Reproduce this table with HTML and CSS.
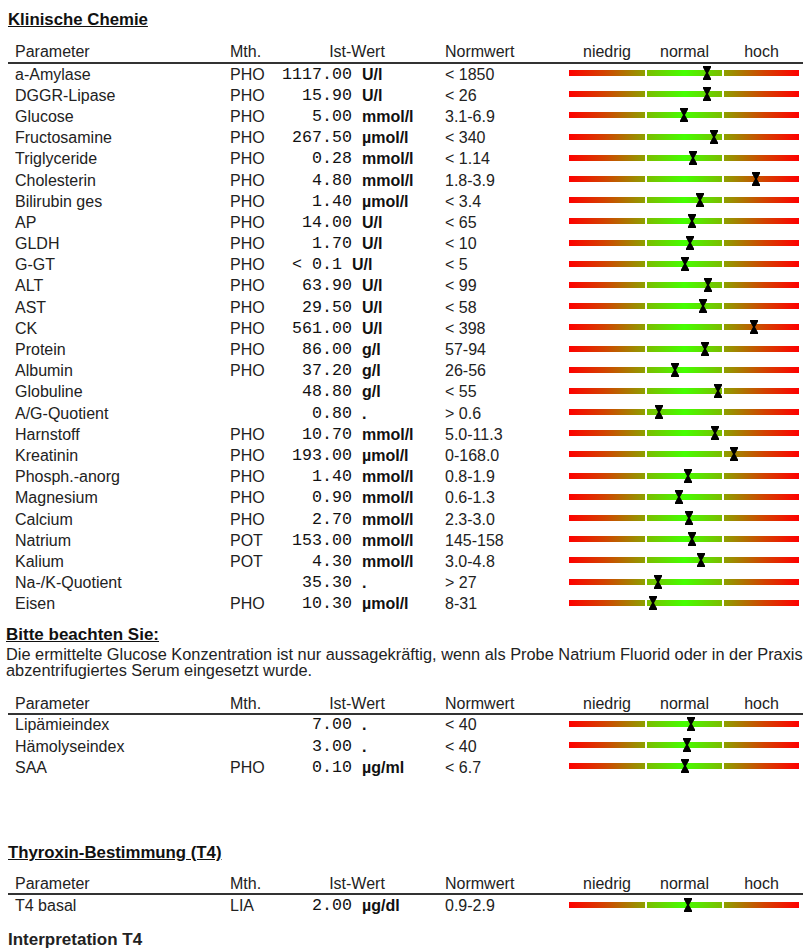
FILE: index.html
```html
<!DOCTYPE html>
<html lang="de">
<head>
<meta charset="utf-8">
<title>Klinische Chemie</title>
<link rel="stylesheet" href="styles.css">
</head>
<body>
<div class="page">
  <h2 class="section-title">Klinische Chemie</h2>
  <div class="table">
    <div class="row head">
      <div class="c-param">Parameter</div><div class="c-mth">Mth.</div><div class="c-ist">Ist-Wert</div><div class="c-norm">Normwert</div>
      <div class="c-bar scale"><span>niedrig</span><span>normal</span><span>hoch</span></div>
    </div>
    <div class="row"><div class="c-param">a-Amylase</div><div class="c-mth">PHO</div><div class="c-val">1117.00</div><div class="c-unit">U/l</div><div class="c-norm">&lt; 1850</div><div class="c-bar"><div class="bar"><i class="lo"></i><i class="ok"></i><i class="hi"></i><svg class="mark" style="left:134px" viewBox="0 0 8 14"><polygon points="0,0 8,0 8,1.5 5,7 8,12.5 8,14 0,14 0,12.5 3,7 0,1.5"/></svg></div></div></div>
    <div class="row"><div class="c-param">DGGR-Lipase</div><div class="c-mth">PHO</div><div class="c-val">15.90</div><div class="c-unit">U/l</div><div class="c-norm">&lt; 26</div><div class="c-bar"><div class="bar"><i class="lo"></i><i class="ok"></i><i class="hi"></i><svg class="mark" style="left:134px" viewBox="0 0 8 14"><polygon points="0,0 8,0 8,1.5 5,7 8,12.5 8,14 0,14 0,12.5 3,7 0,1.5"/></svg></div></div></div>
    <div class="row"><div class="c-param">Glucose</div><div class="c-mth">PHO</div><div class="c-val">5.00</div><div class="c-unit">mmol/l</div><div class="c-norm">3.1-6.9</div><div class="c-bar"><div class="bar"><i class="lo"></i><i class="ok"></i><i class="hi"></i><svg class="mark" style="left:111px" viewBox="0 0 8 14"><polygon points="0,0 8,0 8,1.5 5,7 8,12.5 8,14 0,14 0,12.5 3,7 0,1.5"/></svg></div></div></div>
    <div class="row"><div class="c-param">Fructosamine</div><div class="c-mth">PHO</div><div class="c-val">267.50</div><div class="c-unit">µmol/l</div><div class="c-norm">&lt; 340</div><div class="c-bar"><div class="bar"><i class="lo"></i><i class="ok"></i><i class="hi"></i><svg class="mark" style="left:141px" viewBox="0 0 8 14"><polygon points="0,0 8,0 8,1.5 5,7 8,12.5 8,14 0,14 0,12.5 3,7 0,1.5"/></svg></div></div></div>
    <div class="row"><div class="c-param">Triglyceride</div><div class="c-mth">PHO</div><div class="c-val">0.28</div><div class="c-unit">mmol/l</div><div class="c-norm">&lt; 1.14</div><div class="c-bar"><div class="bar"><i class="lo"></i><i class="ok"></i><i class="hi"></i><svg class="mark" style="left:120px" viewBox="0 0 8 14"><polygon points="0,0 8,0 8,1.5 5,7 8,12.5 8,14 0,14 0,12.5 3,7 0,1.5"/></svg></div></div></div>
    <div class="row"><div class="c-param">Cholesterin</div><div class="c-mth">PHO</div><div class="c-val">4.80</div><div class="c-unit">mmol/l</div><div class="c-norm">1.8-3.9</div><div class="c-bar"><div class="bar"><i class="lo"></i><i class="ok"></i><i class="hi"></i><svg class="mark" style="left:183px" viewBox="0 0 8 14"><polygon points="0,0 8,0 8,1.5 5,7 8,12.5 8,14 0,14 0,12.5 3,7 0,1.5"/></svg></div></div></div>
    <div class="row"><div class="c-param">Bilirubin ges</div><div class="c-mth">PHO</div><div class="c-val">1.40</div><div class="c-unit">µmol/l</div><div class="c-norm">&lt; 3.4</div><div class="c-bar"><div class="bar"><i class="lo"></i><i class="ok"></i><i class="hi"></i><svg class="mark" style="left:127px" viewBox="0 0 8 14"><polygon points="0,0 8,0 8,1.5 5,7 8,12.5 8,14 0,14 0,12.5 3,7 0,1.5"/></svg></div></div></div>
    <div class="row"><div class="c-param">AP</div><div class="c-mth">PHO</div><div class="c-val">14.00</div><div class="c-unit">U/l</div><div class="c-norm">&lt; 65</div><div class="c-bar"><div class="bar"><i class="lo"></i><i class="ok"></i><i class="hi"></i><svg class="mark" style="left:119px" viewBox="0 0 8 14"><polygon points="0,0 8,0 8,1.5 5,7 8,12.5 8,14 0,14 0,12.5 3,7 0,1.5"/></svg></div></div></div>
    <div class="row"><div class="c-param">GLDH</div><div class="c-mth">PHO</div><div class="c-val">1.70</div><div class="c-unit">U/l</div><div class="c-norm">&lt; 10</div><div class="c-bar"><div class="bar"><i class="lo"></i><i class="ok"></i><i class="hi"></i><svg class="mark" style="left:117px" viewBox="0 0 8 14"><polygon points="0,0 8,0 8,1.5 5,7 8,12.5 8,14 0,14 0,12.5 3,7 0,1.5"/></svg></div></div></div>
    <div class="row"><div class="c-param">G-GT</div><div class="c-mth">PHO</div><div class="c-val">&lt; 0.1&nbsp;</div><div class="c-unit shift">U/l</div><div class="c-norm">&lt; 5</div><div class="c-bar"><div class="bar"><i class="lo"></i><i class="ok"></i><i class="hi"></i><svg class="mark" style="left:112px" viewBox="0 0 8 14"><polygon points="0,0 8,0 8,1.5 5,7 8,12.5 8,14 0,14 0,12.5 3,7 0,1.5"/></svg></div></div></div>
    <div class="row"><div class="c-param">ALT</div><div class="c-mth">PHO</div><div class="c-val">63.90</div><div class="c-unit">U/l</div><div class="c-norm">&lt; 99</div><div class="c-bar"><div class="bar"><i class="lo"></i><i class="ok"></i><i class="hi"></i><svg class="mark" style="left:135px" viewBox="0 0 8 14"><polygon points="0,0 8,0 8,1.5 5,7 8,12.5 8,14 0,14 0,12.5 3,7 0,1.5"/></svg></div></div></div>
    <div class="row"><div class="c-param">AST</div><div class="c-mth">PHO</div><div class="c-val">29.50</div><div class="c-unit">U/l</div><div class="c-norm">&lt; 58</div><div class="c-bar"><div class="bar"><i class="lo"></i><i class="ok"></i><i class="hi"></i><svg class="mark" style="left:130px" viewBox="0 0 8 14"><polygon points="0,0 8,0 8,1.5 5,7 8,12.5 8,14 0,14 0,12.5 3,7 0,1.5"/></svg></div></div></div>
    <div class="row"><div class="c-param">CK</div><div class="c-mth">PHO</div><div class="c-val">561.00</div><div class="c-unit">U/l</div><div class="c-norm">&lt; 398</div><div class="c-bar"><div class="bar"><i class="lo"></i><i class="ok"></i><i class="hi"></i><svg class="mark" style="left:181px" viewBox="0 0 8 14"><polygon points="0,0 8,0 8,1.5 5,7 8,12.5 8,14 0,14 0,12.5 3,7 0,1.5"/></svg></div></div></div>
    <div class="row"><div class="c-param">Protein</div><div class="c-mth">PHO</div><div class="c-val">86.00</div><div class="c-unit">g/l</div><div class="c-norm">57-94</div><div class="c-bar"><div class="bar"><i class="lo"></i><i class="ok"></i><i class="hi"></i><svg class="mark" style="left:132px" viewBox="0 0 8 14"><polygon points="0,0 8,0 8,1.5 5,7 8,12.5 8,14 0,14 0,12.5 3,7 0,1.5"/></svg></div></div></div>
    <div class="row"><div class="c-param">Albumin</div><div class="c-mth">PHO</div><div class="c-val">37.20</div><div class="c-unit">g/l</div><div class="c-norm">26-56</div><div class="c-bar"><div class="bar"><i class="lo"></i><i class="ok"></i><i class="hi"></i><svg class="mark" style="left:102px" viewBox="0 0 8 14"><polygon points="0,0 8,0 8,1.5 5,7 8,12.5 8,14 0,14 0,12.5 3,7 0,1.5"/></svg></div></div></div>
    <div class="row"><div class="c-param">Globuline</div><div class="c-mth"></div><div class="c-val">48.80</div><div class="c-unit">g/l</div><div class="c-norm">&lt; 55</div><div class="c-bar"><div class="bar"><i class="lo"></i><i class="ok"></i><i class="hi"></i><svg class="mark" style="left:145px" viewBox="0 0 8 14"><polygon points="0,0 8,0 8,1.5 5,7 8,12.5 8,14 0,14 0,12.5 3,7 0,1.5"/></svg></div></div></div>
    <div class="row"><div class="c-param">A/G-Quotient</div><div class="c-mth"></div><div class="c-val">0.80</div><div class="c-unit">.</div><div class="c-norm">&gt; 0.6</div><div class="c-bar"><div class="bar"><i class="lo"></i><i class="ok"></i><i class="hi"></i><svg class="mark" style="left:86px" viewBox="0 0 8 14"><polygon points="0,0 8,0 8,1.5 5,7 8,12.5 8,14 0,14 0,12.5 3,7 0,1.5"/></svg></div></div></div>
    <div class="row"><div class="c-param">Harnstoff</div><div class="c-mth">PHO</div><div class="c-val">10.70</div><div class="c-unit">mmol/l</div><div class="c-norm">5.0-11.3</div><div class="c-bar"><div class="bar"><i class="lo"></i><i class="ok"></i><i class="hi"></i><svg class="mark" style="left:142px" viewBox="0 0 8 14"><polygon points="0,0 8,0 8,1.5 5,7 8,12.5 8,14 0,14 0,12.5 3,7 0,1.5"/></svg></div></div></div>
    <div class="row"><div class="c-param">Kreatinin</div><div class="c-mth">PHO</div><div class="c-val">193.00</div><div class="c-unit">µmol/l</div><div class="c-norm">0-168.0</div><div class="c-bar"><div class="bar"><i class="lo"></i><i class="ok"></i><i class="hi"></i><svg class="mark" style="left:161px" viewBox="0 0 8 14"><polygon points="0,0 8,0 8,1.5 5,7 8,12.5 8,14 0,14 0,12.5 3,7 0,1.5"/></svg></div></div></div>
    <div class="row"><div class="c-param">Phosph.-anorg</div><div class="c-mth">PHO</div><div class="c-val">1.40</div><div class="c-unit">mmol/l</div><div class="c-norm">0.8-1.9</div><div class="c-bar"><div class="bar"><i class="lo"></i><i class="ok"></i><i class="hi"></i><svg class="mark" style="left:115px" viewBox="0 0 8 14"><polygon points="0,0 8,0 8,1.5 5,7 8,12.5 8,14 0,14 0,12.5 3,7 0,1.5"/></svg></div></div></div>
    <div class="row"><div class="c-param">Magnesium</div><div class="c-mth">PHO</div><div class="c-val">0.90</div><div class="c-unit">mmol/l</div><div class="c-norm">0.6-1.3</div><div class="c-bar"><div class="bar"><i class="lo"></i><i class="ok"></i><i class="hi"></i><svg class="mark" style="left:106px" viewBox="0 0 8 14"><polygon points="0,0 8,0 8,1.5 5,7 8,12.5 8,14 0,14 0,12.5 3,7 0,1.5"/></svg></div></div></div>
    <div class="row"><div class="c-param">Calcium</div><div class="c-mth">PHO</div><div class="c-val">2.70</div><div class="c-unit">mmol/l</div><div class="c-norm">2.3-3.0</div><div class="c-bar"><div class="bar"><i class="lo"></i><i class="ok"></i><i class="hi"></i><svg class="mark" style="left:116px" viewBox="0 0 8 14"><polygon points="0,0 8,0 8,1.5 5,7 8,12.5 8,14 0,14 0,12.5 3,7 0,1.5"/></svg></div></div></div>
    <div class="row"><div class="c-param">Natrium</div><div class="c-mth">POT</div><div class="c-val">153.00</div><div class="c-unit">mmol/l</div><div class="c-norm">145-158</div><div class="c-bar"><div class="bar"><i class="lo"></i><i class="ok"></i><i class="hi"></i><svg class="mark" style="left:119px" viewBox="0 0 8 14"><polygon points="0,0 8,0 8,1.5 5,7 8,12.5 8,14 0,14 0,12.5 3,7 0,1.5"/></svg></div></div></div>
    <div class="row"><div class="c-param">Kalium</div><div class="c-mth">POT</div><div class="c-val">4.30</div><div class="c-unit">mmol/l</div><div class="c-norm">3.0-4.8</div><div class="c-bar"><div class="bar"><i class="lo"></i><i class="ok"></i><i class="hi"></i><svg class="mark" style="left:128px" viewBox="0 0 8 14"><polygon points="0,0 8,0 8,1.5 5,7 8,12.5 8,14 0,14 0,12.5 3,7 0,1.5"/></svg></div></div></div>
    <div class="row"><div class="c-param">Na-/K-Quotient</div><div class="c-mth"></div><div class="c-val">35.30</div><div class="c-unit">.</div><div class="c-norm">&gt; 27</div><div class="c-bar"><div class="bar"><i class="lo"></i><i class="ok"></i><i class="hi"></i><svg class="mark" style="left:85px" viewBox="0 0 8 14"><polygon points="0,0 8,0 8,1.5 5,7 8,12.5 8,14 0,14 0,12.5 3,7 0,1.5"/></svg></div></div></div>
    <div class="row"><div class="c-param">Eisen</div><div class="c-mth">PHO</div><div class="c-val">10.30</div><div class="c-unit">µmol/l</div><div class="c-norm">8-31</div><div class="c-bar"><div class="bar"><i class="lo"></i><i class="ok"></i><i class="hi"></i><svg class="mark" style="left:80px" viewBox="0 0 8 14"><polygon points="0,0 8,0 8,1.5 5,7 8,12.5 8,14 0,14 0,12.5 3,7 0,1.5"/></svg></div></div></div>
  </div>

  <div class="note">
    <h3 class="note-title">Bitte beachten Sie:</h3>
    <p class="note-text">Die ermittelte Glucose Konzentration ist nur aussagekräftig, wenn als Probe Natrium Fluorid oder in der Praxis abzentrifugiertes Serum eingesetzt wurde.</p>
  </div>

  <div class="table table2">
    <div class="row head">
      <div class="c-param">Parameter</div><div class="c-mth">Mth.</div><div class="c-ist">Ist-Wert</div><div class="c-norm">Normwert</div>
      <div class="c-bar scale"><span>niedrig</span><span>normal</span><span>hoch</span></div>
    </div>
    <div class="row"><div class="c-param">Lipämieindex</div><div class="c-mth"></div><div class="c-val">7.00</div><div class="c-unit">.</div><div class="c-norm">&lt; 40</div><div class="c-bar"><div class="bar"><i class="lo"></i><i class="ok"></i><i class="hi"></i><svg class="mark" style="left:118px" viewBox="0 0 8 14"><polygon points="0,0 8,0 8,1.5 5,7 8,12.5 8,14 0,14 0,12.5 3,7 0,1.5"/></svg></div></div></div>
    <div class="row"><div class="c-param">Hämolyseindex</div><div class="c-mth"></div><div class="c-val">3.00</div><div class="c-unit">.</div><div class="c-norm">&lt; 40</div><div class="c-bar"><div class="bar"><i class="lo"></i><i class="ok"></i><i class="hi"></i><svg class="mark" style="left:114px" viewBox="0 0 8 14"><polygon points="0,0 8,0 8,1.5 5,7 8,12.5 8,14 0,14 0,12.5 3,7 0,1.5"/></svg></div></div></div>
    <div class="row"><div class="c-param">SAA</div><div class="c-mth">PHO</div><div class="c-val">0.10</div><div class="c-unit">µg/ml</div><div class="c-norm">&lt; 6.7</div><div class="c-bar"><div class="bar"><i class="lo"></i><i class="ok"></i><i class="hi"></i><svg class="mark" style="left:112px" viewBox="0 0 8 14"><polygon points="0,0 8,0 8,1.5 5,7 8,12.5 8,14 0,14 0,12.5 3,7 0,1.5"/></svg></div></div></div>
  </div>

  <h2 class="section-title t4-title">Thyroxin-Bestimmung (T4)</h2>
  <div class="table table3">
    <div class="row head">
      <div class="c-param">Parameter</div><div class="c-mth">Mth.</div><div class="c-ist">Ist-Wert</div><div class="c-norm">Normwert</div>
      <div class="c-bar scale"><span>niedrig</span><span>normal</span><span>hoch</span></div>
    </div>
    <div class="row"><div class="c-param">T4 basal</div><div class="c-mth">LIA</div><div class="c-val">2.00</div><div class="c-unit">µg/dl</div><div class="c-norm">0.9-2.9</div><div class="c-bar"><div class="bar"><i class="lo"></i><i class="ok"></i><i class="hi"></i><svg class="mark" style="left:115px" viewBox="0 0 8 14"><polygon points="0,0 8,0 8,1.5 5,7 8,12.5 8,14 0,14 0,12.5 3,7 0,1.5"/></svg></div></div></div>
  </div>

  <h3 class="interp-title">Interpretation T4</h3>
</div>
</body>
</html>
```
FILE: styles.css
```css
* { box-sizing: border-box; }
html, body { margin: 0; padding: 0; background: #fff; }
body {
  font-family: "Liberation Sans", Arial, sans-serif;
  font-size: 16px;
  color: #222;
}
.page {
  width: 805px;
  padding: 10px 2px 0 8px;
}
.section-title {
  margin: 0;
  font-size: 16.8px;
  line-height: 20px;
  font-weight: bold;
  text-decoration: underline;
  color: #111;
}
.table { margin-top: 11px; }
.row {
  display: grid;
  grid-template-columns: 222px 45px 77px 93px 119px 239px;
  align-items: center;
  height: 21.2px;
  line-height: 20px;
  white-space: nowrap;
}
.row.head {
  height: 23px;
  border-bottom: 2px solid #333;
  grid-template-columns: 222px 45px 170px 119px 239px;
}
.c-param { padding-left: 7px; }
.c-ist { text-align: center; padding-right: 6px; }
.c-val {
  text-align: right;
  font-family: "Liberation Mono", "Courier New", monospace;
  font-size: 16.67px;
  color: #111;
}
.c-unit { padding-left: 10px; font-weight: bold; color: #111; }
.c-unit.shift { margin-left: -10px; }
.c-bar { padding: 0 4px 0 5px; }
.scale { display: flex; gap: 2px; }
.scale span { text-align: center; }
.scale span:nth-child(1) { width: 76px; }
.scale span:nth-child(2) { width: 75px; }
.scale span:nth-child(3) { width: 75px; }
.bar {
  position: relative;
  display: flex;
  gap: 2px;
  height: 6px;
  margin-bottom: 3px;
}
.bar i { display: block; height: 6px; }
.bar .lo { width: 76px; background: linear-gradient(to right, #ff0000 0%, #d44000 45%, #8ea000 100%); }
.bar .ok { width: 75px; background: linear-gradient(to right, #7cbc00 0%, #44ff00 50%, #7cbc00 100%); }
.bar .hi { width: 75px; background: linear-gradient(to right, #8ea000 0%, #d44000 55%, #ff0000 100%); }
.mark {
  position: absolute;
  top: -4px;
  width: 8px;
  height: 14px;
  fill: #000;
}
.note { margin-top: 10px; margin-left: -2px; }
.note-title {
  margin: 0;
  font-size: 17px;
  line-height: 20px;
  font-weight: bold;
  text-decoration: underline;
  color: #111;
}
.note-text {
  margin: 1px 0 0;
  font-size: 16.35px;
  line-height: 16px;
  width: 800px;
}
.table2 { margin-top: 16px; }
.table2 .row.head { height: 21px; }
.t4-title { margin-top: 65px; }
.table3 { margin-top: 11px; }
.table3 .row.head { height: 21px; }
.interp-title {
  margin: 13px 0 0;
  font-size: 17px;
  line-height: 20px;
  font-weight: bold;
}
```
